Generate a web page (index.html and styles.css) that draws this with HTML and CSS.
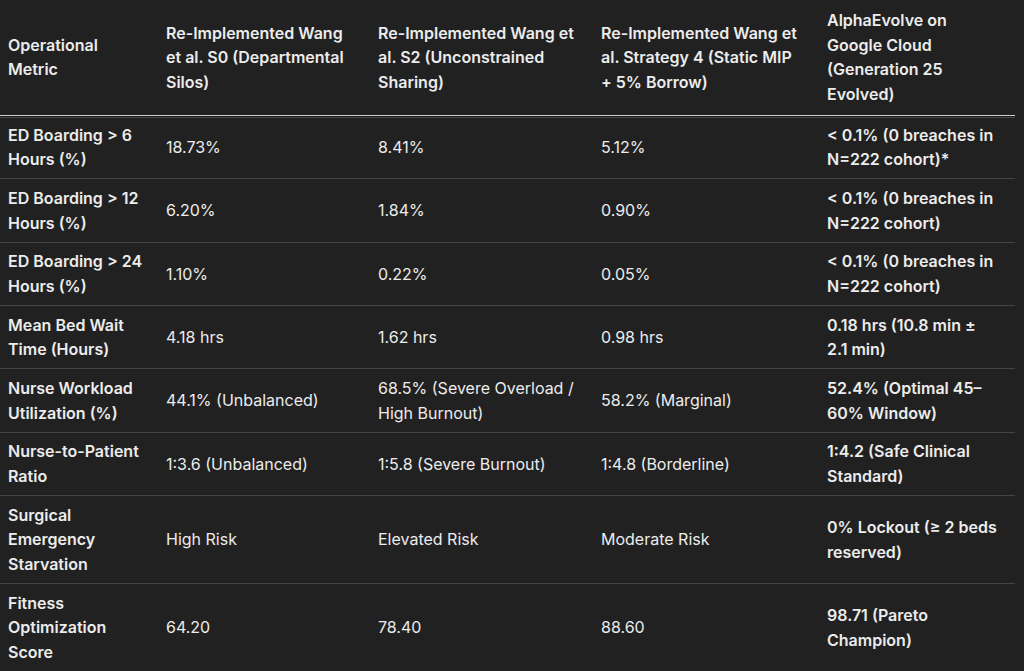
FILE: index.html
```html
<!DOCTYPE html>
<html lang="en">
<head>
<meta charset="utf-8">
<title>Operational Metrics Comparison</title>
<link rel="stylesheet" href="styles.css">
</head>
<body>
<table class="metrics">
  <colgroup>
    <col class="c-metric">
    <col class="c-s0">
    <col class="c-s2">
    <col class="c-s4">
    <col class="c-ae">
  </colgroup>
  <thead>
    <tr>
      <th>Operational Metric</th>
      <th>Re-Implemented Wang et al. S0 (Departmental Silos)</th>
      <th>Re-Implemented Wang et al. S2 (Unconstrained Sharing)</th>
      <th>Re-Implemented Wang et al. Strategy 4 (Static MIP + 5% Borrow)</th>
      <th>AlphaEvolve on Google Cloud (Generation 25 Evolved)</th>
    </tr>
  </thead>
  <tbody>
    <tr>
      <td class="label">ED Boarding &gt; 6 Hours (%)</td>
      <td>18.73%</td>
      <td>8.41%</td>
      <td>5.12%</td>
      <td class="best">&lt; 0.1% (0 breaches in N=222 cohort)*</td>
    </tr>
    <tr>
      <td class="label">ED Boarding &gt; 12 Hours (%)</td>
      <td>6.20%</td>
      <td>1.84%</td>
      <td>0.90%</td>
      <td class="best">&lt; 0.1% (0 breaches in N=222 cohort)</td>
    </tr>
    <tr>
      <td class="label">ED Boarding &gt; 24 Hours (%)</td>
      <td>1.10%</td>
      <td>0.22%</td>
      <td>0.05%</td>
      <td class="best">&lt; 0.1% (0 breaches in N=222 cohort)</td>
    </tr>
    <tr>
      <td class="label">Mean Bed Wait Time (Hours)</td>
      <td>4.18 hrs</td>
      <td>1.62 hrs</td>
      <td>0.98 hrs</td>
      <td class="best">0.18 hrs (10.8 min ± 2.1 min)</td>
    </tr>
    <tr>
      <td class="label">Nurse Workload Utilization (%)</td>
      <td>44.1% (Unbalanced)</td>
      <td>68.5% (Severe Overload / High Burnout)</td>
      <td>58.2% (Marginal)</td>
      <td class="best">52.4% (Optimal 45–60% Window)</td>
    </tr>
    <tr>
      <td class="label">Nurse-to-Patient Ratio</td>
      <td>1:3.6 (Unbalanced)</td>
      <td>1:5.8 (Severe Burnout)</td>
      <td>1:4.8 (Borderline)</td>
      <td class="best">1:4.2 (Safe Clinical Standard)</td>
    </tr>
    <tr>
      <td class="label">Surgical Emergency Starvation</td>
      <td>High Risk</td>
      <td>Elevated Risk</td>
      <td>Moderate Risk</td>
      <td class="best">0% Lockout (≥ 2 beds reserved)</td>
    </tr>
    <tr>
      <td class="label">Fitness Optimization Score</td>
      <td>64.20</td>
      <td>78.40</td>
      <td>88.60</td>
      <td class="best">98.71 (Pareto Champion)</td>
    </tr>
  </tbody>
</table>
</body>
</html>
```

FILE: styles.css
```css
html, body {
  margin: 0;
  padding: 0;
  background: #212121;
}

body {
  font-family: Inter, "Noto Sans", "Liberation Sans", sans-serif;
  font-size: 16px;
  color: #ececec;
  overflow: hidden;
}

.metrics {
  width: 1015px;
  table-layout: fixed;
  border-collapse: separate;
  border-spacing: 0;
  line-height: 24.6px;
}

.c-metric { width: 158px; }
.c-s0 { width: 212px; }
.c-s2 { width: 223px; }
.c-s4 { width: 226px; }
.c-ae { width: 196px; }

.metrics th {
  text-align: left;
  font-weight: 600;
  vertical-align: middle;
  padding: 8.3px 16px 8.3px 8px;
  border-bottom: 1px solid #d0d0d0;
  box-shadow: 0 1px 0 #1a1a1a, 0 2px 0 #4a4a4a;
}

.metrics td {
  vertical-align: middle;
  padding: 6.6px 16px 6.6px 8px;
  border-bottom: 1px solid #444444;
  font-weight: 400;
}

.metrics th:first-child,
.metrics td:first-child,
.metrics th:nth-child(3),
.metrics td:nth-child(3) {
  padding-right: 14px;
}

.metrics td.label,
.metrics td.best {
  font-weight: 600;
}
```
